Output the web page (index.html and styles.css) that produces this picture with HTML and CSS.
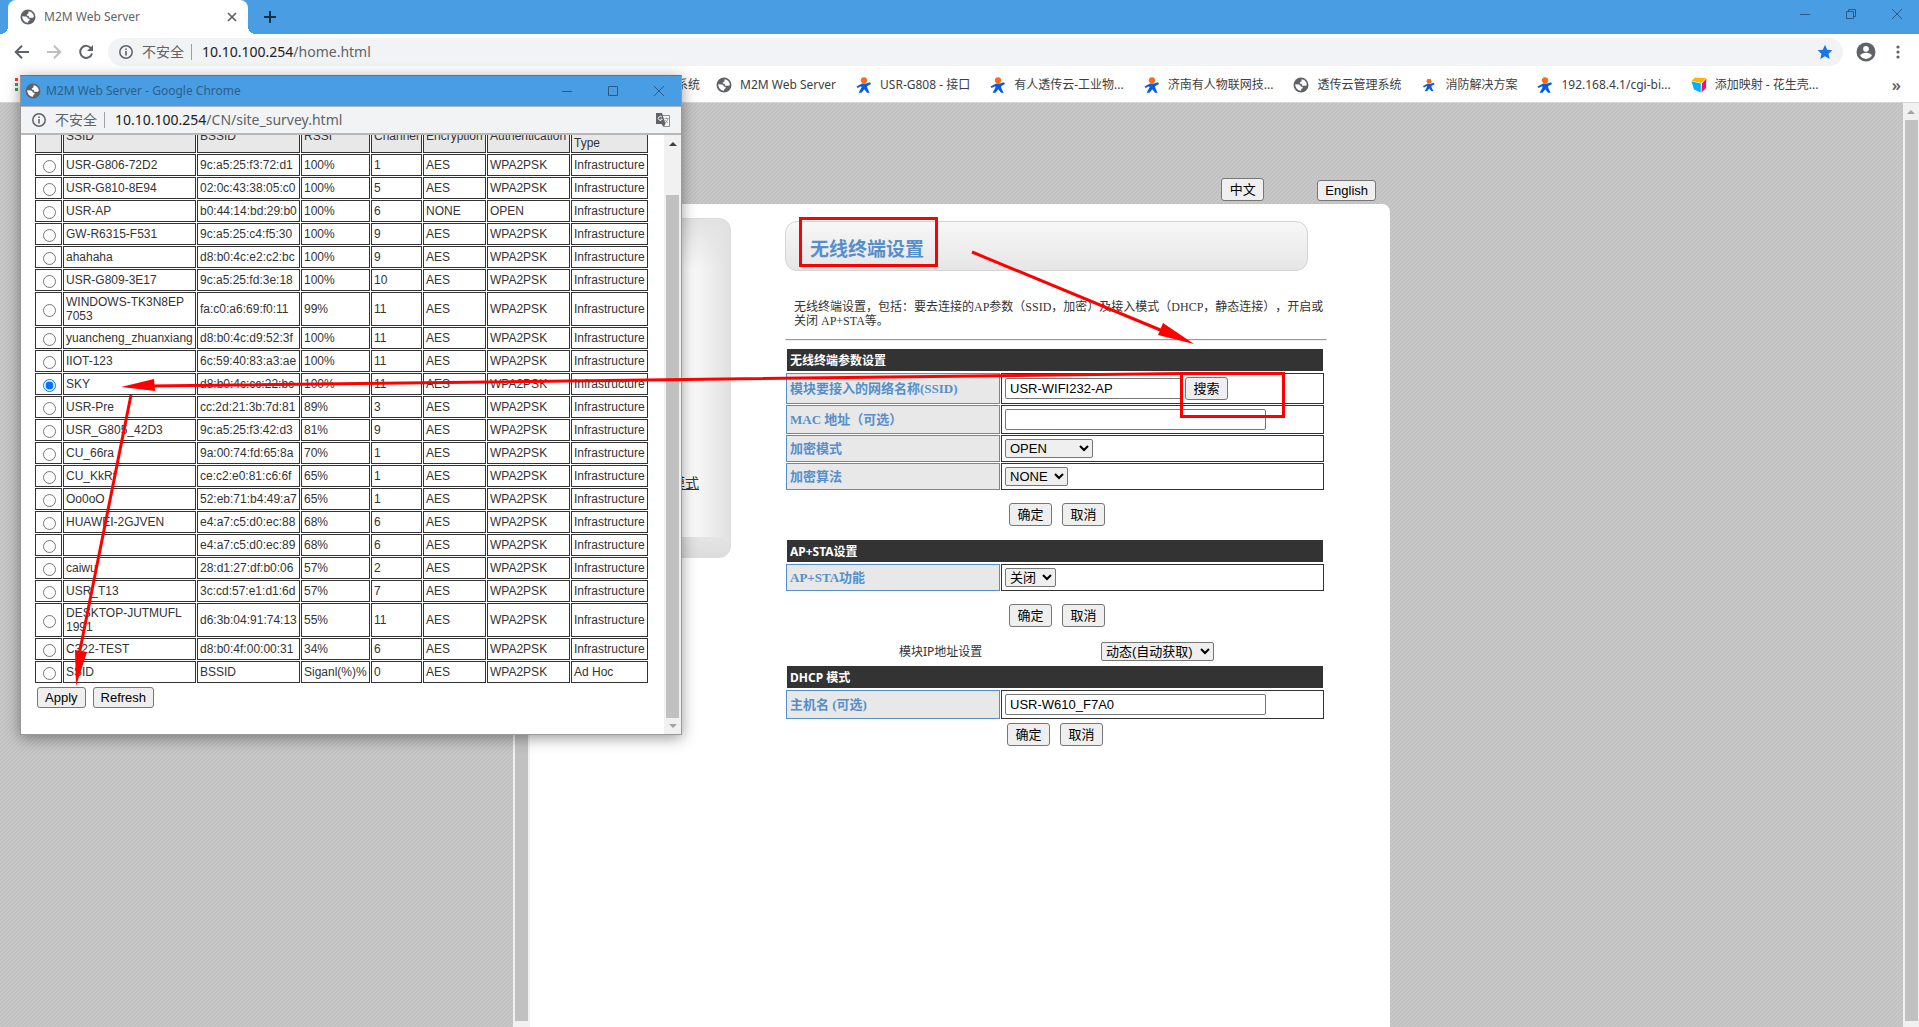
FILE: index.html
```html
<!DOCTYPE html>
<html lang="zh-CN">
<head>
<meta charset="utf-8">
<title>M2M Web Server</title>
<link rel="stylesheet" href="styles.css">
</head>
<body>
<svg class="defs" aria-hidden="true">
  <symbol id="globe" viewBox="0 0 16 16">
    <circle cx="8" cy="8" r="7.5" fill="#5f6368"/>
    <path fill="#fff" d="M8.6 2.2c2.600.2 4.800 2.200 5.200 4.800.1.9-.5 1.800-1.500 1.800H10c-.7 0-1.100-.5-1.100-1.100 0-.8-.6-1-1.300-1-.9 0-1.100-.9-.6-1.500.5-.5 1.500-.6 1.500-1.300zM2.200 7.300l3.400.1c1.400 0 1.800.8 2 1.500.2.700.9.6 1.500.8.8.3.8 1.300.2 1.700-.9.500-1.300.8-1.300 2.400-3.300-.1-5.800-3-5.800-6.500z"/>
  </symbol>
  <symbol id="usr" viewBox="0 0 16 16">
    <path fill="#0b5be0" d="M6 6.500h4L14 5.200l1 1.800-4 2.300.4 2 2.200 4.400H11L8.300 12.300 5.500 15.700H2.600L5.500 10.600 5.200 9.200 1.500 11l-1-1.600z"/>
    <circle cx="8" cy="3.300" r="3.100" fill="#ff6a13"/>
  </symbol>
  <symbol id="info" viewBox="0 0 16 16">
    <circle cx="8" cy="8" r="6.200" fill="none" stroke="#5f6368" stroke-width="1.500"/>
    <path fill="#5f6368" d="M7.200 7h1.600v4.500H7.200zM7.200 4.500h1.600v1.600H7.200z"/>
  </symbol>
</svg>

<div class="browser">
  <header class="tabstrip">
    <div class="tab">
      <svg class="ico"><use href="#globe"/></svg>
      <span class="tab-title">M2M Web Server</span>
      <button class="plain" aria-label="关闭标签页"><svg width="10" height="10" viewBox="0 0 10 10"><path d="M1 1l8 8M9 1l-8 8" stroke="#5f6368" stroke-width="1.700"/></svg></button>
    </div>
    <button class="plain new-tab" aria-label="新标签页"><svg width="12" height="12" viewBox="0 0 12 12"><path d="M6 0v12M0 6h12" stroke="#1f2d3a" stroke-width="2"/></svg></button>
    <div class="win-controls">
      <button class="plain" aria-label="最小化"><svg width="10" height="10" viewBox="0 0 10 10"><path d="M0 5.500h10" stroke="#2c5a82"/></svg></button>
      <button class="plain" aria-label="还原"><svg width="10" height="10" viewBox="0 0 10 10"><path d="M.5 2.500h7v7h-7zM2.500 2.500v-2h7v7h-2" fill="none" stroke="#2c5a82"/></svg></button>
      <button class="plain" aria-label="关闭"><svg width="10" height="10" viewBox="0 0 10 10"><path d="M0 0l10 10M10 0L0 10" stroke="#2c5a82"/></svg></button>
    </div>
  </header>

  <div class="toolbar">
    <button class="plain" aria-label="后退"><svg width="16" height="16" viewBox="0 0 16 16"><path d="M15 8H2M8 1.700L1.700 8 8 14.300" fill="none" stroke="#5f6368" stroke-width="2"/></svg></button>
    <button class="plain" aria-label="前进"><svg width="16" height="16" viewBox="0 0 16 16"><path d="M1 8h13M8 1.700L14.300 8 8 14.300" fill="none" stroke="#bdbfc1" stroke-width="2"/></svg></button>
    <button class="plain" aria-label="刷新"><svg width="16" height="16" viewBox="0 0 16 16"><path d="M13.200 4.500A6 6 0 1 0 14 9.500" fill="none" stroke="#5f6368" stroke-width="2"/><path d="M15 1v6H9z" fill="#5f6368"/></svg></button>
    <div class="omnibox">
      <svg class="ico"><use href="#info"/></svg>
      <span class="insecure">不安全</span>
      <span class="url"><b>10.10.100.254</b>/home.html</span>
      <svg class="star" width="16" height="16" viewBox="0 0 16 16"><path fill="#1a73e8" d="M8 .8l2.200 4.900 5.200.5-3.900 3.500 1.200 5.300L8 12.200 3.300 15l1.200-5.300L.6 6.200l5.200-.5z"/></svg>
    </div>
    <svg width="20" height="20" viewBox="0 0 20 20"><circle cx="10" cy="10" r="9.500" fill="#5f6368"/><circle cx="10" cy="6.800" r="2.900" fill="#fff"/><path d="M4.200 13.800c0-2 3.900-3 5.800-3s5.800 1 5.800 3a7 7 0 0 1-11.600 0z" fill="#fff"/></svg>
    <svg class="dots" width="4" height="14" viewBox="0 0 4 14"><g fill="#5f6368"><circle cx="2" cy="2" r="1.600"/><circle cx="2" cy="7" r="1.600"/><circle cx="2" cy="12" r="1.600"/></g></svg>
  </div>

  <nav class="bookmarks">
    <svg class="apps" width="14" height="14" viewBox="0 0 14 14"><path fill="#ea4335" d="M0 0h3v3H0zM5 0h3v3H5z"/><path fill="#34a853" d="M0 5h3v3H0zM0 10h3v3H0z"/><path fill="#4285f4" d="M5 5h3v3H5z"/><path fill="#fbbc04" d="M5 10h3v3H5z"/></svg>
    <a class="bm bm-first" href="#">系统</a>
    <a class="bm" href="#"><svg class="ico"><use href="#globe"/></svg>M2M Web Server</a>
    <a class="bm" href="#"><svg class="ico"><use href="#usr"/></svg>USR-G808 - 接口</a>
    <a class="bm" href="#"><svg class="ico"><use href="#usr"/></svg>有人透传云-工业物...</a>
    <a class="bm" href="#"><svg class="ico"><use href="#usr"/></svg>济南有人物联网技...</a>
    <a class="bm" href="#"><svg class="ico"><use href="#globe"/></svg>透传云管理系统</a>
    <a class="bm" href="#"><svg class="ico" viewBox="-2 -2 20 20"><use href="#usr" width="16" height="16"/></svg>消防解决方案</a>
    <a class="bm" href="#"><svg class="ico"><use href="#usr"/></svg>192.168.4.1/cgi-bi...</a>
    <a class="bm" href="#"><svg class="ico" viewBox="0 0 16 16"><path fill="#ffb400" d="M4 .5L15 1l-4.500 5L.5 4z"/><path fill="#00b0f8" d="M.5 4.500L10 6.500l-.3 9-6.700-3z"/><path fill="#ff1060" d="M15.300 1.500l-.3 9.500-4.500 4.500.5-9z"/></svg>添加映射 - 花生壳...</a>
    <span class="more">»</span>
  </nav>

  <div class="viewport">
    <div class="page">
      <div class="wrap">
        <div class="lang">
          <button class="btn">中文</button>
          <button class="btn lang-en">English</button>
        </div>
        <div class="frame">
          <div class="frame-scroll"><div class="thumb"></div></div>
          <nav class="side"><div class="side-box"><a href="#">模式</a></div></nav>
          <main class="main">
            <h3 class="heading">无线终端设置</h3>
            <p class="desc">无线终端设置，包括：要去连接的AP参数（SSID，加密）及接入模式（DHCP，静态连接），开启或关闭 AP+STA等。</p>
            <hr class="rule">

            <form>
              <table class="cfg">
                <colgroup><col class="c-label"><col></colgroup>
                <tr><th class="bar" colspan="2">无线终端参数设置</th></tr>
                <tr class="r31"><th><label for="ssid">模块要接入的网络名称(SSID)</label></th><td><div class="pair"><input class="text short" id="ssid" value="USR-WIFI232-AP"><button type="button" class="btn">搜索</button></div></td></tr>
                <tr class="r29"><th><label for="mac">MAC 地址（可选）</label></th><td><input class="text" id="mac"></td></tr>
                <tr class="r27"><th><label for="mode">加密模式</label></th><td><select class="sel w88" id="mode"><option>OPEN</option></select></td></tr>
                <tr class="r27"><th><label for="algo">加密算法</label></th><td><select class="sel w63" id="algo"><option>NONE</option></select></td></tr>
              </table>
              <div class="actions"><button type="button" class="btn">确定</button><button type="button" class="btn">取消</button></div>
            </form>

            <form>
              <table class="cfg">
                <colgroup><col class="c-label"><col></colgroup>
                <tr><th class="bar" colspan="2">AP+STA设置</th></tr>
                <tr class="r27"><th><label for="apsta">AP+STA功能</label></th><td><select class="sel w51" id="apsta"><option>关闭</option></select></td></tr>
              </table>
              <div class="actions"><button type="button" class="btn">确定</button><button type="button" class="btn">取消</button></div>
            </form>

            <form>
              <div class="ip-row"><label for="ip">模块IP地址设置</label><select class="sel w113" id="ip"><option>动态(自动获取)</option></select></div>
              <table class="cfg">
                <colgroup><col class="c-label"><col></colgroup>
                <tr><th class="bar" colspan="2">DHCP 模式</th></tr>
                <tr class="r29"><th><label for="host">主机名 (可选)</label></th><td><input class="text" id="host" value="USR-W610_F7A0"></td></tr>
              </table>
              <div class="actions tight"><button type="button" class="btn">确定</button><button type="button" class="btn">取消</button></div>
            </form>
          </main>
        </div>
      </div>
    </div>
    <div class="scrollbar"><i class="up"></i><div class="thumb"></div></div>
  </div>
</div>

<section class="popup">
  <header class="popup-title">
    <svg class="ico"><use href="#globe"/></svg>
    <span>M2M Web Server - Google Chrome</span>
    <div class="win-controls">
      <button class="plain" aria-label="最小化"><svg width="10" height="10" viewBox="0 0 10 10"><path d="M0 5.500h10" stroke="#2c5a82"/></svg></button>
      <button class="plain" aria-label="最大化"><svg width="10" height="10" viewBox="0 0 10 10"><path d="M.5.5h9v9h-9z" fill="none" stroke="#2c5a82"/></svg></button>
      <button class="plain" aria-label="关闭"><svg width="10" height="10" viewBox="0 0 10 10"><path d="M0 0l10 10M10 0L0 10" stroke="#2c5a82"/></svg></button>
    </div>
  </header>
  <div class="popup-url">
    <svg class="ico"><use href="#info"/></svg>
    <span class="insecure">不安全</span>
    <span class="url"><b>10.10.100.254</b>/CN/site_survey.html</span>
    <svg class="translate" width="14" height="14" viewBox="0 0 14 14"><path d="M5 2.500h8.500v11H8" fill="#f8f8f8" stroke="#8a8d91"/><path d="M8.500 5.500h4M10.500 4.500v1M12 5.500q-.5 3-3 4.500M9 7q1 2 3 3" fill="none" stroke="#8a8d91" stroke-width=".8"/><path fill="#5f6368" d="M0 0h6l3.500 11H0z"/><path d="M6 4.200a2 2 0 1 0 .2 2H4.500" fill="none" stroke="#fff"/><path fill="#5f6368" d="M5.500 11h4L7.500 14z"/></svg>
  </div>
  <div class="popup-body">
    <div class="survey">
      <table class="scan">
        <colgroup><col class="c27"><col class="c133"><col class="c103"><col class="c69"><col class="c51"><col class="c63"><col class="c83"><col class="c77"></colgroup>
        <thead><tr><th></th><th>SSID</th><th>BSSID</th><th>RSSI</th><th>Channel</th><th>Encryption</th><th>Authentication</th><th>Network Type</th></tr></thead>
        <tbody>
        <tr><td><input type="radio" name="ap" aria-label="USR-G806-72D2"></td><td>USR-G806-72D2</td><td>9c:a5:25:f3:72:d1</td><td>100%</td><td>1</td><td>AES</td><td>WPA2PSK</td><td>Infrastructure</td></tr>
        <tr><td><input type="radio" name="ap" aria-label="USR-G810-8E94"></td><td>USR-G810-8E94</td><td>02:0c:43:38:05:c0</td><td>100%</td><td>5</td><td>AES</td><td>WPA2PSK</td><td>Infrastructure</td></tr>
        <tr><td><input type="radio" name="ap" aria-label="USR-AP"></td><td>USR-AP</td><td>b0:44:14:bd:29:b0</td><td>100%</td><td>6</td><td>NONE</td><td>OPEN</td><td>Infrastructure</td></tr>
        <tr><td><input type="radio" name="ap" aria-label="GW-R6315-F531"></td><td>GW-R6315-F531</td><td>9c:a5:25:c4:f5:30</td><td>100%</td><td>9</td><td>AES</td><td>WPA2PSK</td><td>Infrastructure</td></tr>
        <tr><td><input type="radio" name="ap" aria-label="ahahaha"></td><td>ahahaha</td><td>d8:b0:4c:e2:c2:bc</td><td>100%</td><td>9</td><td>AES</td><td>WPA2PSK</td><td>Infrastructure</td></tr>
        <tr><td><input type="radio" name="ap" aria-label="USR-G809-3E17"></td><td>USR-G809-3E17</td><td>9c:a5:25:fd:3e:18</td><td>100%</td><td>10</td><td>AES</td><td>WPA2PSK</td><td>Infrastructure</td></tr>
        <tr class="tall"><td><input type="radio" name="ap" aria-label="WINDOWS-TK3N8EP 7053"></td><td>WINDOWS-TK3N8EP 7053</td><td>fa:c0:a6:69:f0:11</td><td>99%</td><td>11</td><td>AES</td><td>WPA2PSK</td><td>Infrastructure</td></tr>
        <tr><td><input type="radio" name="ap" aria-label="yuancheng_zhuanxiang"></td><td>yuancheng_zhuanxiang</td><td>d8:b0:4c:d9:52:3f</td><td>100%</td><td>11</td><td>AES</td><td>WPA2PSK</td><td>Infrastructure</td></tr>
        <tr><td><input type="radio" name="ap" aria-label="IIOT-123"></td><td>IIOT-123</td><td>6c:59:40:83:a3:ae</td><td>100%</td><td>11</td><td>AES</td><td>WPA2PSK</td><td>Infrastructure</td></tr>
        <tr><td><input type="radio" name="ap" aria-label="SKY" checked></td><td>SKY</td><td>d8:b0:4c:cc:22:bc</td><td>100%</td><td>11</td><td>AES</td><td>WPA2PSK</td><td>Infrastructure</td></tr>
        <tr><td><input type="radio" name="ap" aria-label="USR-Pre"></td><td>USR-Pre</td><td>cc:2d:21:3b:7d:81</td><td>89%</td><td>3</td><td>AES</td><td>WPA2PSK</td><td>Infrastructure</td></tr>
        <tr><td><input type="radio" name="ap" aria-label="USR_G805_42D3"></td><td>USR_G805_42D3</td><td>9c:a5:25:f3:42:d3</td><td>81%</td><td>9</td><td>AES</td><td>WPA2PSK</td><td>Infrastructure</td></tr>
        <tr><td><input type="radio" name="ap" aria-label="CU_66ra"></td><td>CU_66ra</td><td>9a:00:74:fd:65:8a</td><td>70%</td><td>1</td><td>AES</td><td>WPA2PSK</td><td>Infrastructure</td></tr>
        <tr><td><input type="radio" name="ap" aria-label="CU_KkRf"></td><td>CU_KkRf</td><td>ce:c2:e0:81:c6:6f</td><td>65%</td><td>1</td><td>AES</td><td>WPA2PSK</td><td>Infrastructure</td></tr>
        <tr><td><input type="radio" name="ap" aria-label="Oo0oO"></td><td>Oo0oO</td><td>52:eb:71:b4:49:a7</td><td>65%</td><td>1</td><td>AES</td><td>WPA2PSK</td><td>Infrastructure</td></tr>
        <tr><td><input type="radio" name="ap" aria-label="HUAWEI-2GJVEN"></td><td>HUAWEI-2GJVEN</td><td>e4:a7:c5:d0:ec:88</td><td>68%</td><td>6</td><td>AES</td><td>WPA2PSK</td><td>Infrastructure</td></tr>
        <tr><td><input type="radio" name="ap" aria-label="e4:a7:c5:d0:ec:89"></td><td></td><td>e4:a7:c5:d0:ec:89</td><td>68%</td><td>6</td><td>AES</td><td>WPA2PSK</td><td>Infrastructure</td></tr>
        <tr><td><input type="radio" name="ap" aria-label="caiwu"></td><td>caiwu</td><td>28:d1:27:df:b0:06</td><td>57%</td><td>2</td><td>AES</td><td>WPA2PSK</td><td>Infrastructure</td></tr>
        <tr><td><input type="radio" name="ap" aria-label="USR_T13"></td><td>USR_T13</td><td>3c:cd:57:e1:d1:6d</td><td>57%</td><td>7</td><td>AES</td><td>WPA2PSK</td><td>Infrastructure</td></tr>
        <tr class="tall"><td><input type="radio" name="ap" aria-label="DESKTOP-JUTMUFL 1991"></td><td>DESKTOP-JUTMUFL 1991</td><td>d6:3b:04:91:74:13</td><td>55%</td><td>11</td><td>AES</td><td>WPA2PSK</td><td>Infrastructure</td></tr>
        <tr><td><input type="radio" name="ap" aria-label="C322-TEST"></td><td>C322-TEST</td><td>d8:b0:4f:00:00:31</td><td>34%</td><td>6</td><td>AES</td><td>WPA2PSK</td><td>Infrastructure</td></tr>
        <tr><td><input type="radio" name="ap" aria-label="SSID"></td><td>SSID</td><td>BSSID</td><td>Siganl(%)%</td><td>0</td><td>AES</td><td>WPA2PSK</td><td>Ad Hoc</td></tr>
        </tbody>
      </table>
      <div class="survey-actions"><button class="btn-s">Apply</button><button class="btn-s">Refresh</button></div>
    </div>
    <div class="scrollbar inner"><i class="up dark"></i><div class="thumb"></div><i class="down"></i></div>
  </div>
</section>

<svg class="marks" width="1919" height="1027" aria-hidden="true">
  <g fill="none" stroke="#f00" stroke-width="3">
    <rect x="800.500" y="218.500" width="136" height="47"/>
    <rect x="1181.500" y="373.500" width="102" height="43"/>
    <path d="M972 252L1170 334M1182 373.500L150 386M131 395L79 655"/>
  </g>
  <path fill="#f00" d="M1194 344l-36-9 5-12zM121 387l33-8 1 12zM76 686l-1-36 12 2z"/>
</svg>
</body>
</html>
```
FILE: styles.css
```css
* { box-sizing: border-box; }
body {
  margin: 0;
  overflow: hidden;
  font: 12px/16px "Noto Sans", "Noto Sans CJK SC", sans-serif;
  color: #333;
}
.defs { position: absolute; width: 0; height: 0; }
.ico { width: 16px; height: 16px; flex: none; }
.plain { border: 0; padding: 0; background: none; display: flex; }

/* browser chrome */
.browser { display: flex; flex-direction: column; height: 100vh; }
.tabstrip { display: flex; height: 34px; background: #489de3; padding-left: 8px; align-items: center; }
.tab {
  position: relative;
  display: flex; align-items: center; gap: 8px;
  width: 240px; height: 34px; padding: 0 11px 0 12px;
  background: #fff; border-radius: 8px 8px 0 0; color: #5f6368;
}
.tab::before, .tab::after {
  content: ""; position: absolute; bottom: 0; width: 8px; height: 8px;
}
.tab::before { left: -8px; background: radial-gradient(circle at 0 0, transparent 8px, #fff 8px); }
.tab::after { right: -8px; background: radial-gradient(circle at 100% 0, transparent 8px, #fff 8px); }
.tab-title { flex: 1; }
.new-tab { margin-left: 16px; }
.win-controls { display: flex; gap: 36px; margin-left: auto; padding-right: 17px; }
.tabstrip .win-controls { padding-bottom: 6px; }

.toolbar { display: flex; align-items: center; gap: 16px; height: 36px; padding: 0 19px 0 14px; background: #fff; }
.omnibox {
  flex: 1; display: flex; align-items: center;
  height: 28px; margin: 0 -3px 0 -2px; padding: 0 10px; border-radius: 14px; background: #f1f3f4;
}
.insecure, .url { font-size: 14px; line-height: 20px; color: #5f6368; }
.insecure { margin-left: 8px; padding-right: 7px; border-right: 1px solid #9aa0a6; line-height: 16px; }
.url { margin-left: 10px; }
.url b { font-weight: 400; color: #202124; }
.star { margin-left: auto; }
.dots { margin-left: 4px; }

.bookmarks { display: flex; align-items: center; height: 33px; padding: 0 18px 2px 15px; background: #fff; border-bottom: 1px solid #d5d5d5; }
.bm { display: flex; align-items: center; gap: 8px; margin-right: 20px; color: #3c4043; text-decoration: none; white-space: nowrap; }
.bm-first { width: 671px; justify-content: flex-end; margin-right: 16px; }
.more { margin-left: auto; font-size: 16px; font-weight: 600; color: #5f6368; }

/* scroll bars */
.scrollbar { display: flex; flex-direction: column; align-items: center; width: 16px; flex: none; background: #f1f1f1; padding-bottom: 6px; }
.thumb { width: 13px; background: #c1c1c1; }
.scrollbar .thumb { flex: 1; }
.up, .down { width: 0; height: 0; border: 4px solid transparent; }
.up { border-top: 0; border-bottom-color: #a3a3a3; margin: 7px 0 6px; }
.dark { border-bottom-color: #404040; }
.down { border-bottom: 0; border-top-color: #a3a3a3; margin: 6px 0 0; }
.inner { width: 17px; }
.inner .up { margin-bottom: 49px; }

/* device page */
.viewport { flex: 1; display: flex; min-height: 0; }
.page {
  flex: 1; overflow: hidden;
  background: linear-gradient(135deg, #c0c0c0 25%, #c9c9c9 25% 50%, #c0c0c0 50% 75%, #c9c9c9 75%) 0 0 / 4px 4px;
}
.wrap { display: flex; flex-direction: column; max-width: 877px; height: 100%; margin: 0 auto; }
.lang { display: flex; justify-content: flex-end; align-items: flex-end; gap: 53px; height: 101px; padding: 0 14px 3px 0; }
.frame { flex: 1; display: flex; background: #fff; border-radius: 8px 8px 0 0; }
.frame-scroll { display: flex; justify-content: center; width: 17px; background: #f1f1f1; padding-bottom: 6px; }
.side { width: 255px; padding: 14px 54px 0 20px; }
.side-box {
  display: flex; justify-content: flex-end; align-items: flex-start;
  height: 340px; padding: 256px 31px 0 0;
  border: 1px solid #ddd; border-radius: 12px;
  background:
    linear-gradient(#e4e4e4, #dcdcdc) bottom / 100% 20px no-repeat,
    linear-gradient(#e2e2e2, transparent 50px),
    linear-gradient(90deg, #fff 75%, #e0e0e0);
}
.side-box a { color: #333; font-size: 14px; }
.main { flex: 1; padding: 17px 63px 0 0; }
.heading {
  margin: 0 19px 0 0; height: 50px; padding: 5px 0 0 24px;
  border: 1px solid #d4d4d4; border-radius: 12px;
  background: linear-gradient(#f7f7f7, #e6e6e6);
  font-size: 19px; line-height: 44px; color: #558fcb;
}
.desc { margin: 29px 0 11px; padding-left: 9px; font: 12px/14px "Liberation Serif", "Noto Sans CJK SC", serif; text-spacing-trim: space-all; }
.rule { margin: 0 0 6px; border: 1px solid; border-color: #999 #eee #eee; }

.cfg { width: 540px; table-layout: fixed; border-spacing: 1px; }
.c-label { width: 214px; }
.cfg th, .cfg td { padding: 0 3px; text-align: left; }
.cfg th { border: 1px solid #558fcb; background: #e8e8e8; color: #558fcb; font: bold 13px/16px "Liberation Serif", "Noto Sans CJK SC", serif; }
.cfg td { border: 1px solid #333; }
.cfg .bar { height: 24px; padding-top: 2px; border-color: #fff; background: #333; color: #fff; font: bold 12px/16px "Noto Sans", "Noto Sans CJK SC", sans-serif; }
.r31 > * { height: 31px; }
.r29 > * { height: 29px; }
.r27 > * { height: 27px; }

.btn, .text, .sel, .btn-s { font: 13px/16px "Liberation Sans", "Noto Sans CJK SC", sans-serif; color: #000; margin: 0; }
.btn, .btn-s { padding: 0 7px; border: 1px solid #767676; border-radius: 3px; background: #efefef; }
.btn { min-width: 43px; height: 23px; }
.btn-s, .lang-en { height: 21px; }
.text { display: block; width: 261px; height: 21px; padding: 0 4px; border: 1px solid #767676; border-radius: 2px; background: #fff; }
.short { width: 177px; }
.pair { display: flex; align-items: center; gap: 3px; }
.sel { display: block; height: 19px; border-radius: 2px; }
.w88 { width: 88px; }
.w63 { width: 63px; }
.w51 { width: 51px; }
.w113 { width: 113px; }
.actions { display: flex; gap: 10px; margin: 12px 0; padding-left: 224px; }
.tight { margin: 3px 0; padding-left: 222px; }
.ip-row { display: flex; align-items: center; margin: 15px 0 3px; padding-left: 114px; }
.ip-row label { width: 202px; }

/* survey window */
.popup {
  position: absolute; left: 20px; top: 75px;
  display: flex; flex-direction: column;
  width: 662px; height: 660px;
  border: 1px solid #999; border-top-color: #3b7fb8; background: #fff;
  box-shadow: 0 3px 14px rgba(0, 0, 0, .4);
}
.popup-title { display: flex; align-items: center; gap: 5px; height: 31px; padding-left: 4px; background: #489de3; color: #2c5f8c; border-bottom: 1px solid #b0b0b0; }
.popup-url { display: flex; align-items: center; height: 28px; padding: 0 11px 0 10px; background: #f1f3f4; border-bottom: 2px solid #b8b8b8; }
.translate { margin-left: auto; }
.popup-body { flex: 1; display: flex; min-height: 0; }
.survey {
  flex: 1; display: flex; flex-direction: column; justify-content: flex-end;
  overflow: hidden; padding: 0 0 26px 13px;
}
.scan { width: 615px; flex: none; table-layout: fixed; border-spacing: 1px; font: 12px/14px "Liberation Sans", sans-serif; }
.scan th, .scan td { height: 22px; padding: 0 2px; border: 1px solid #333; text-align: left; }
.scan th { height: 34px; background: #e8e8e8; font-weight: 400; }
.scan .tall td { height: 34px; }
.scan input { display: block; width: 13px; height: 13px; margin: 3px 0 0 5px; }
.c27 { width: 27px; }
.c133 { width: 133px; }
.c103 { width: 103px; }
.c69 { width: 69px; }
.c51 { width: 51px; }
.c63 { width: 63px; }
.c83 { width: 83px; }
.c77 { width: 77px; }
.survey-actions { display: flex; gap: 7px; margin-top: 3px; padding-left: 3px; }

/* red pen marks over both windows */
.marks { position: absolute; left: 0; top: 0; pointer-events: none; }
```
